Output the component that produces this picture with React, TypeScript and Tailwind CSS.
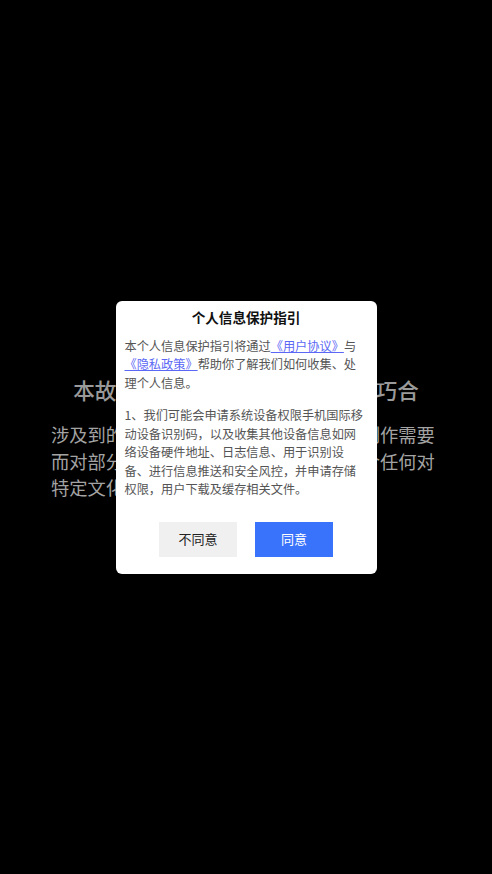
import React from 'react';

const App: React.FC = () => {
  return (
    <div
      className="relative min-h-screen bg-black flex flex-col justify-center"
      style={{ fontFamily: '"Noto Sans CJK SC", "Noto Sans", sans-serif' }}
    >
      {/* 背景页面内容 */}
      <div className="flex flex-col items-center pt-[2px]">
        <h1 className="text-[21.6px] leading-[30px] font-medium text-[#9a9a9a] text-center">
          本故事纯属虚构，如有雷同纯属巧合
        </h1>
        <p className="mt-[16px] w-[390px] text-[18.3px] leading-[26.5px] text-[#a3a3a3]">
          涉及到的人物、情节均为虚构，因剧情制作需要而对部分内容进行了改编，不代表或暗含任何对特定文化、宗教、习俗的不尊重。
        </p>
      </div>

      {/* 遮罩 + 弹窗 */}
      <div className="absolute inset-0 flex items-center justify-center">
        <div className="w-[261px] bg-white rounded-[6px] pt-[6px] pb-[17px] px-[9px]">
          <h2 className="text-center text-[13.6px] leading-[20px] font-bold text-[#111]">
            个人信息保护指引
          </h2>
          <div className="mt-[10px] text-[12.2px] leading-[18.5px] text-[#555]">
            <p>
              本个人信息保护指引将通过
              <span className="text-[#5b68f5] underline underline-offset-1">《用户协议》</span>
              与
              <span className="text-[#5b68f5] underline underline-offset-1">《隐私政策》</span>
              帮助你了解我们如何收集、处理个人信息。
            </p>
            <p className="mt-[14px]">
              1、我们可能会申请系统设备权限手机国际移动设备识别码，以及收集其他设备信息如网络设备硬件地址、日志信息、用于识别设备、进行信息推送和安全风控，并申请存储权限，用户下载及缓存相关文件。
            </p>
          </div>
          <div className="mt-[23px] flex justify-center gap-[18px]">
            <button className="w-[78px] h-[35px] bg-[#f0f0f0] text-[13px] text-[#222]">
              不同意
            </button>
            <button className="w-[78px] h-[35px] bg-[#3a73fb] text-[13px] text-white">
              同意
            </button>
          </div>
        </div>
      </div>
    </div>
  );
};

export default App;
